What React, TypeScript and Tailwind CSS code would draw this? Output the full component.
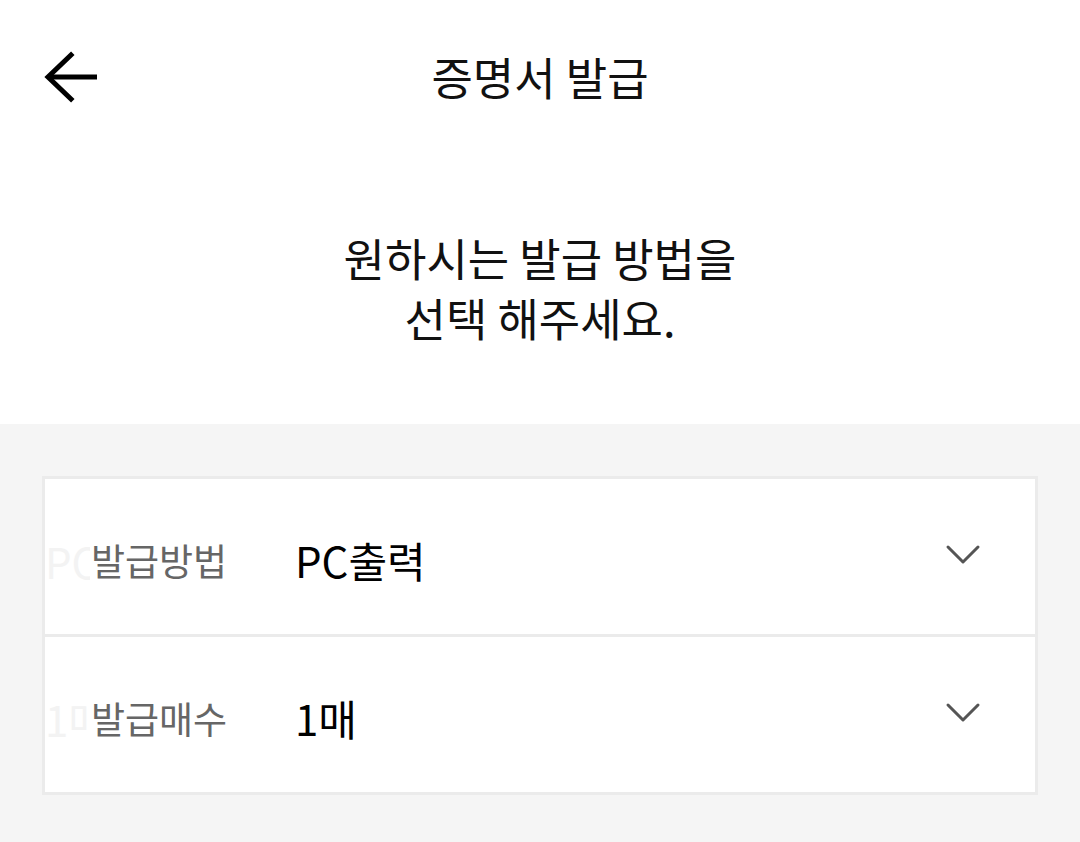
import { FC } from "react";

const FONT = { fontFamily: '"Noto Sans CJK KR", "Noto Sans", sans-serif' };

const BackArrow: FC = () => (
    <svg width="60" height="60" viewBox="0 0 60 60" fill="none">
        <path d="M31 8 L8 30 L31 52" stroke="#000" strokeWidth="5" strokeLinecap="square" strokeLinejoin="miter" />
        <path d="M9 30 H57" stroke="#000" strokeWidth="5" />
    </svg>
);

const Chevron: FC = () => (
    <svg width="36" height="22" viewBox="0 0 36 22" fill="none">
        <path d="M3 3 L18 18 L33 3" stroke="#555" strokeWidth="3" strokeLinecap="round" strokeLinejoin="round" />
    </svg>
);

interface RowProps {
    label: string;
    value: string;
    last?: boolean;
}

const SelectRow: FC<RowProps> = ({ label, value, last }) => {
    return (
        <div className={`relative flex items-center pl-[46px] pr-[54px] ${last ? "h-[155px]" : "h-[158px] border-b-[3px] border-[#ebebeb]"}`}>
            <div className="absolute left-0 top-[50%] w-[45px] -translate-y-[44%] overflow-hidden whitespace-nowrap text-[42px] text-[#f3f3f3]">
                {value}
            </div>
            <div className="relative w-[204px] pt-[8px]">
                <span className="bg-white text-[37px] text-[#666]">{label}</span>
            </div>
            <span className="relative flex-1 text-[42px] text-black pt-[6px]">{value}</span>
            <div className="pb-[4px]">
                <Chevron />
            </div>
        </div>
    );
};

export default function App() {
    return (
        <div className="w-[1080px] h-[842px] bg-white flex flex-col" style={FONT}>
            <header className="grid h-[154px] grid-cols-[1fr_auto_1fr] items-center px-[40px]">
                <div className="flex items-center">
                    <BackArrow />
                </div>
                <h1 className="text-[45px] text-[#111]">증명서 발급</h1>
                <div />
            </header>

            <div className="pt-[74px] pb-[76px] text-center text-[45px] leading-[60px] text-[#111]">
                <p>원하시는 발급 방법을</p>
                <p>선택 해주세요.</p>
            </div>

            <section className="flex-1 bg-[#f5f5f5] px-[42px] pt-[52px]">
                <div className="border-[3px] border-[#ebebeb] bg-white">
                    <SelectRow label="발급방법" value="PC출력" />
                    <SelectRow label="발급매수" value="1매" last />
                </div>
            </section>
        </div>
    );
}
